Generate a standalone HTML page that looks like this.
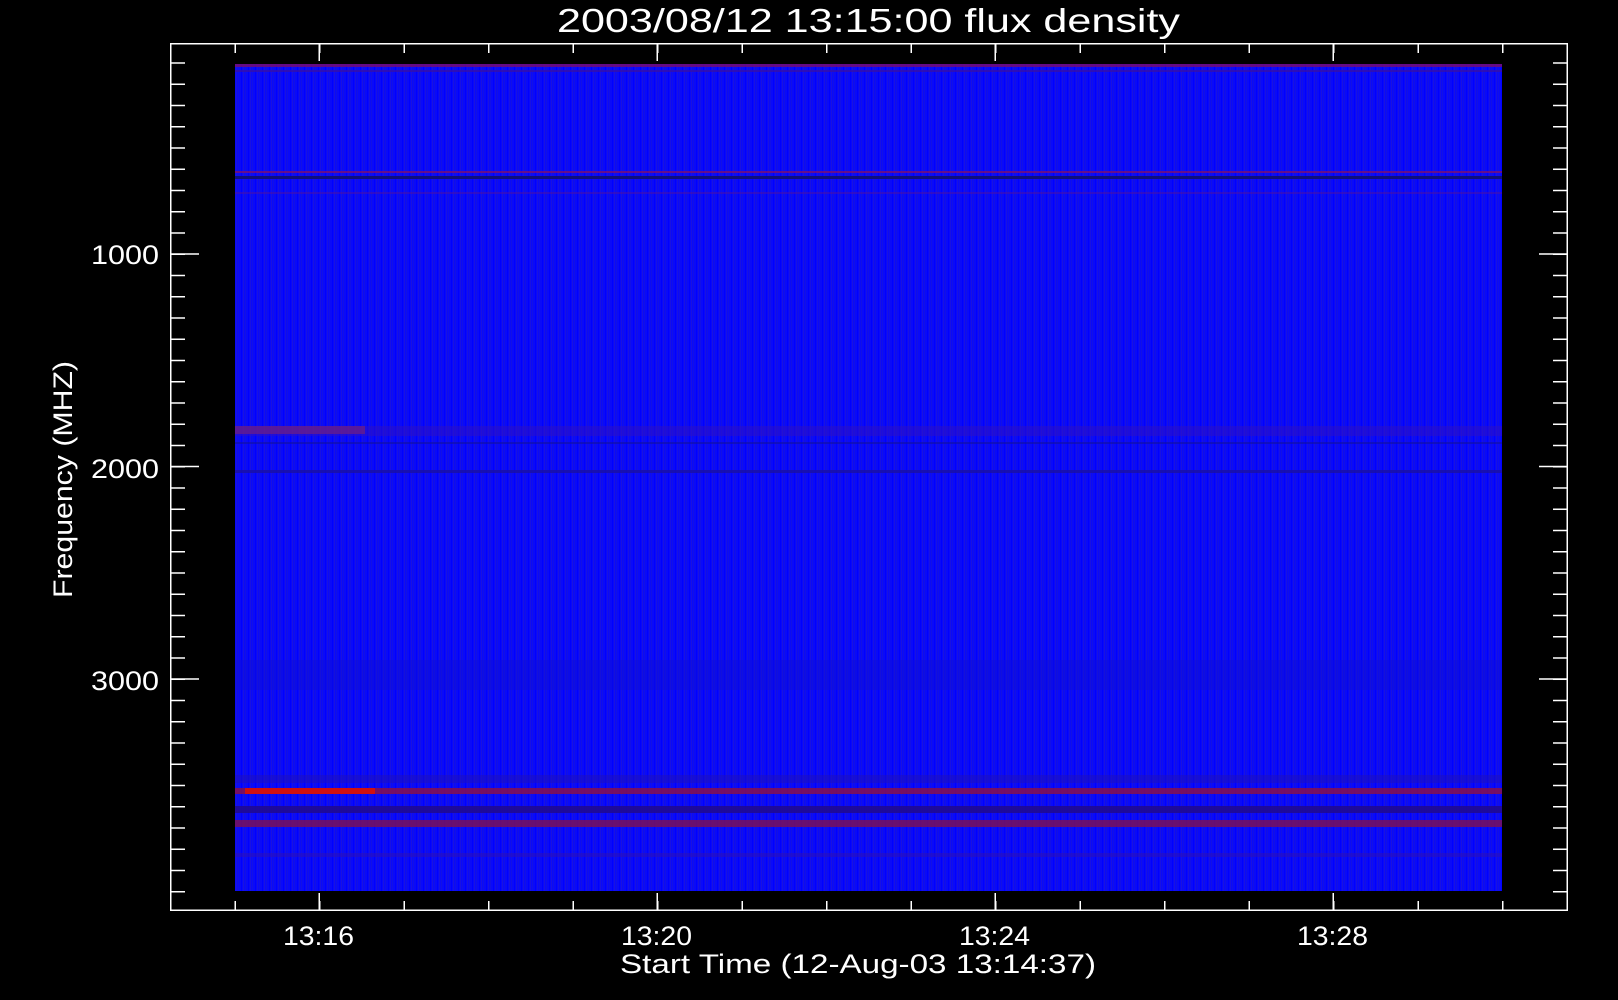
<!DOCTYPE html>
<html><head><meta charset="utf-8"><style>
html,body{margin:0;padding:0;background:#000;width:1618px;height:1000px;overflow:hidden}
svg{display:block}
text{font-family:"Liberation Sans",sans-serif;fill:#fff}
</style></head><body>
<svg width="1618" height="1000" viewBox="0 0 1618 1000" xmlns="http://www.w3.org/2000/svg">
<defs>
<pattern id="vt" patternUnits="userSpaceOnUse" x="0" y="0" width="7" height="10">
<rect width="7" height="10" fill="#0a0af8"/>
<rect x="0" width="1" height="10" fill="#1210e6"/>
<rect x="3" width="1" height="10" fill="#0000ff"/>
<rect x="5" width="1" height="10" fill="#1a12e0"/>
</pattern>
<pattern id="yt" patternUnits="userSpaceOnUse" x="0" y="62.25" width="1618" height="21.25">
<rect x="170" y="0" width="15" height="1.5" fill="#fff"/>
<rect x="1553" y="0" width="15" height="1.5" fill="#fff"/>
</pattern>
<pattern id="xt" patternUnits="userSpaceOnUse" x="234.5" y="0" width="84.5" height="1000">
<rect x="0" y="43" width="1.5" height="10" fill="#fff"/>
<rect x="0" y="901" width="1.5" height="10" fill="#fff"/>
</pattern>
</defs>
<rect x="235" y="64" width="1267" height="827" fill="url(#vt)"/>
<rect x="235" y="64" width="1267" height="3" fill="#7a0a6a" opacity="0.8"/>
<rect x="235" y="70" width="1267" height="2" fill="#3a10a0" opacity="0.7"/>
<rect x="235" y="171" width="1267" height="2" fill="#8a1060" opacity="0.7"/>
<rect x="235" y="176" width="1267" height="3" fill="#10107a"/>
<rect x="235" y="192" width="1267" height="2" fill="#5010a0" opacity="0.5"/>
<rect x="235" y="426" width="1267" height="10" fill="#3010c0" opacity="0.5"/>
<rect x="235" y="442" width="1267" height="2" fill="#1010a0" opacity="0.6"/>
<rect x="235" y="470" width="1267" height="3" fill="#1a10a0" opacity="0.8"/>
<rect x="235" y="660" width="1267" height="30" fill="#1010c8" opacity="0.35"/>
<rect x="235" y="775" width="1267" height="8" fill="#2010b8" opacity="0.5"/>
<rect x="235" y="788" width="1267" height="6" fill="#901040" opacity="0.8"/>
<rect x="235" y="806" width="1267" height="7" fill="#200a90" opacity="0.9"/>
<rect x="235" y="820" width="1267" height="7" fill="#801050" opacity="0.8"/>
<rect x="235" y="853" width="1267" height="4" fill="#3010b0" opacity="0.5"/>
<rect x="245" y="788" width="130" height="6" fill="#d01010"/>
<rect x="235" y="426" width="130" height="8" fill="#702080" opacity="0.7"/>
<rect x="170.75" y="43.75" width="1396.5" height="866.5" fill="none" stroke="#fff" stroke-width="1.5"/>
<rect x="170" y="50" width="1398" height="855" fill="url(#yt)"/>
<rect x="230" y="43" width="1280" height="868" fill="url(#xt)"/>
<g fill="#fff">
<rect x="170" y="253.25" width="29" height="1.5"/><rect x="1539" y="253.25" width="29" height="1.5"/>
<rect x="170" y="465.75" width="29" height="1.5"/><rect x="1539" y="465.75" width="29" height="1.5"/>
<rect x="170" y="678.25" width="29" height="1.5"/><rect x="1539" y="678.25" width="29" height="1.5"/>
<rect x="318.5" y="43" width="1.5" height="18"/><rect x="318.5" y="893" width="1.5" height="18"/>
<rect x="656.5" y="43" width="1.5" height="18"/><rect x="656.5" y="893" width="1.5" height="18"/>
<rect x="994.5" y="43" width="1.5" height="18"/><rect x="994.5" y="893" width="1.5" height="18"/>
<rect x="1332.5" y="43" width="1.5" height="18"/><rect x="1332.5" y="893" width="1.5" height="18"/>
</g>
<text x="557" y="32" font-size="33" textLength="623" lengthAdjust="spacingAndGlyphs">2003/08/12 13:15:00 flux density</text>
<g font-size="27">
<text x="91" y="264" textLength="68" lengthAdjust="spacingAndGlyphs">1000</text>
<text x="91" y="478" textLength="68" lengthAdjust="spacingAndGlyphs">2000</text>
<text x="91" y="690" textLength="68" lengthAdjust="spacingAndGlyphs">3000</text>
</g>
<g font-size="27">
<text x="283" y="945" textLength="71" lengthAdjust="spacingAndGlyphs">13:16</text>
<text x="621" y="945" textLength="71" lengthAdjust="spacingAndGlyphs">13:20</text>
<text x="959" y="945" textLength="71" lengthAdjust="spacingAndGlyphs">13:24</text>
<text x="1297" y="945" textLength="71" lengthAdjust="spacingAndGlyphs">13:28</text>
</g>
<text x="620" y="973" font-size="27" textLength="476" lengthAdjust="spacingAndGlyphs">Start Time (12-Aug-03 13:14:37)</text>
<text transform="translate(72,598) rotate(-90)" font-size="27" textLength="237" lengthAdjust="spacingAndGlyphs">Frequency (MHZ)</text>
</svg>
</body></html>
